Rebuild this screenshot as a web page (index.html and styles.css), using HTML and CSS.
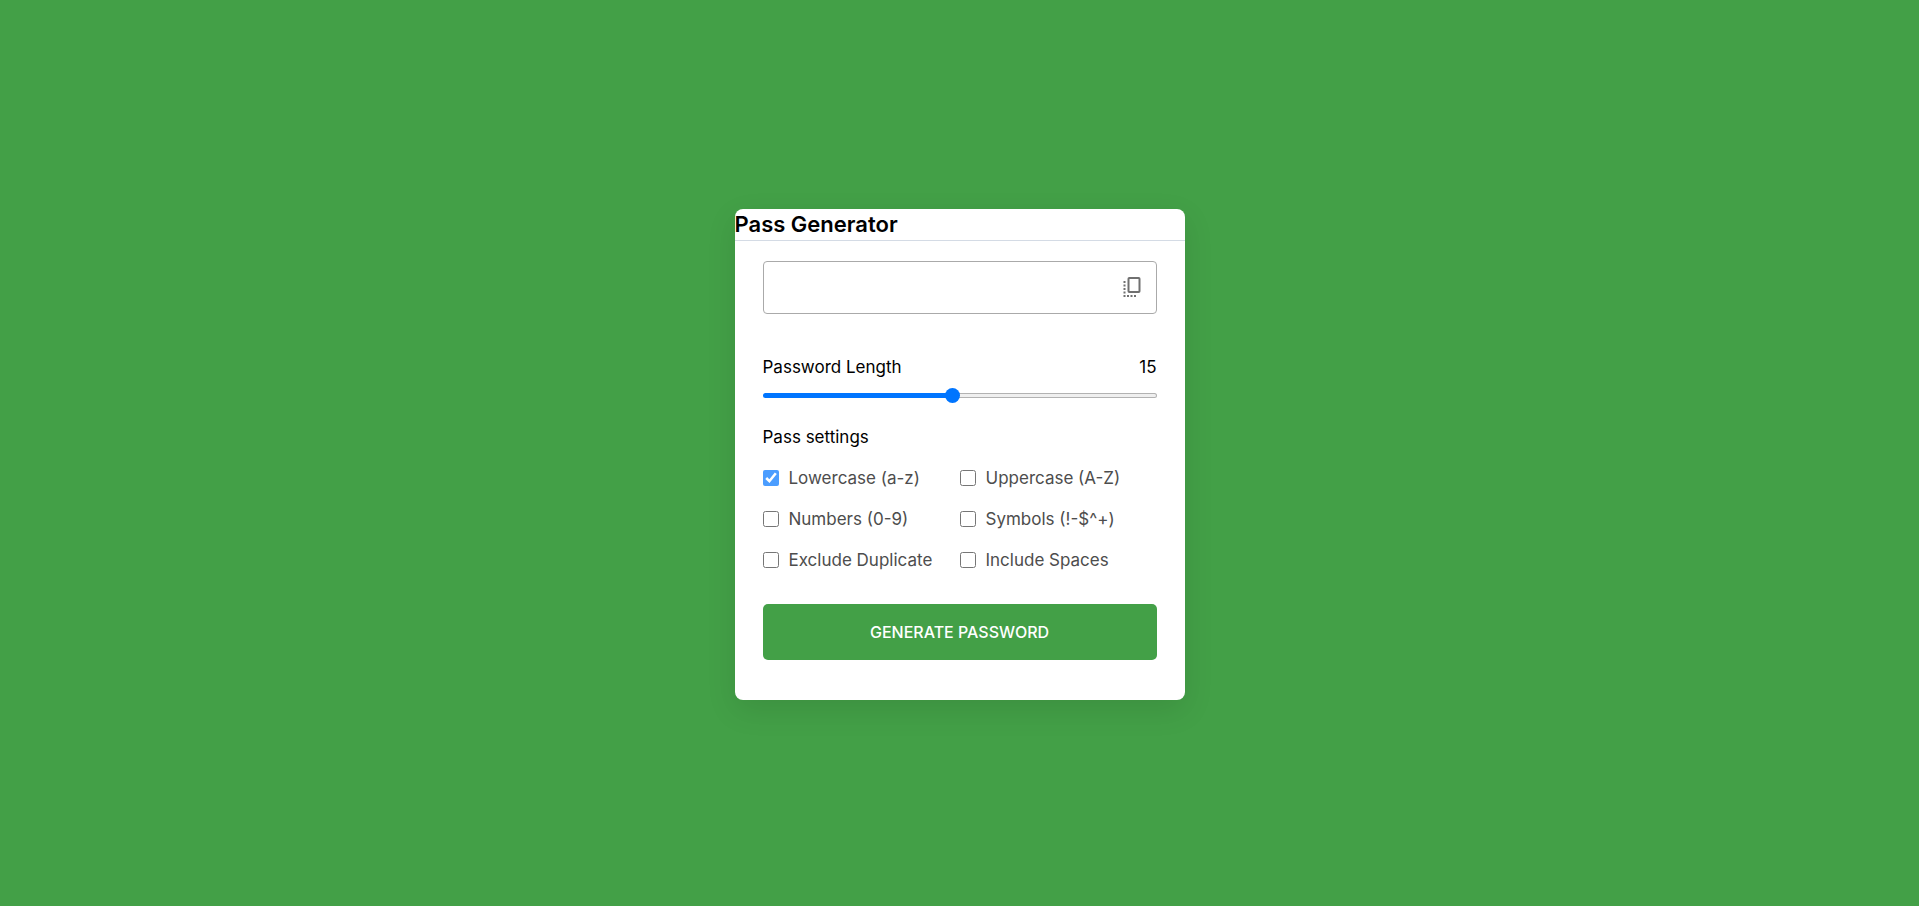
FILE: index.html
```html
<!DOCTYPE html>
<html lang="en">
<head>
  <meta charset="utf-8">
  <meta name="viewport" content="width=device-width, initial-scale=1">
  <title>Pass Generator</title>
  <link rel="stylesheet" href="styles.css">
</head>
<body>
  <main class="card">
    <h1 class="title">Pass Generator</h1>
    <div class="content">
      <div class="password">
        <input class="password-field" type="text" aria-label="Generated password" readonly>
        <button class="copy" type="button" aria-label="Copy password">
          <svg class="copy-icon" viewBox="0 0 18 20" aria-hidden="true">
            <rect x="5.5" y="1" width="11" height="14" rx="0.8" fill="none" stroke="currentColor" stroke-width="2"/>
            <path fill="currentColor" d="M.5 4h2v2h-2zM.5 7.5h2v2h-2zM.5 11h2v2h-2zM.5 14.5h2v2h-2zM.5 18h2v2h-2zM4 18h2v2H4zM7.5 18h2v2h-2zM11 18h2v2h-2z"/>
          </svg>
        </button>
      </div>
      <div class="length">
        <label for="length">Password Length</label>
        <output for="length">15</output>
      </div>
      <input class="slider" id="length" type="range" min="1" max="30" value="15" style="--fill: 48%">
      <fieldset class="settings">
        <legend class="legend">Pass settings</legend>
        <div class="options">
          <div class="option"><input class="check locked" type="checkbox" id="lowercase" checked><label for="lowercase">Lowercase (a-z)</label></div>
          <div class="option"><input class="check" type="checkbox" id="uppercase"><label for="uppercase">Uppercase (A-Z)</label></div>
          <div class="option"><input class="check" type="checkbox" id="numbers"><label for="numbers">Numbers (0-9)</label></div>
          <div class="option"><input class="check" type="checkbox" id="symbols"><label for="symbols">Symbols (!-$^+)</label></div>
          <div class="option"><input class="check" type="checkbox" id="duplicate"><label for="duplicate">Exclude Duplicate</label></div>
          <div class="option"><input class="check" type="checkbox" id="spaces"><label for="spaces">Include Spaces</label></div>
        </div>
      </fieldset>
      <button class="generate" type="button">GENERATE PASSWORD</button>
    </div>
  </main>
</body>
</html>
```

FILE: styles.css
```css
* {
  box-sizing: border-box;
  margin: 0;
  padding: 0;
}

body {
  display: flex;
  align-items: center;
  justify-content: center;
  min-height: 100vh;
  padding-top: 3px;
  background: #43a047;
  color: #000;
  font: 17px/24px Inter, "Liberation Sans", sans-serif;
}

.card {
  width: 100%;
  max-width: 450px;
  border-radius: 8px;
  background: #fff;
  box-shadow: 0 10px 30px rgba(0, 0, 0, 0.1);
}

.title {
  border-bottom: 1px solid #d4dbe5;
  font-size: 22px;
  font-weight: 600;
  line-height: 31px;
}

.content {
  padding: 20px 28px 40px;
}

.password {
  position: relative;
}

.password-field {
  display: block;
  width: 100%;
  height: 53px;
  padding: 0 44px 0 16px;
  border: 1px solid #aaa;
  border-radius: 4px;
  background: none;
  font: inherit;
  outline: none;
}

.copy {
  position: absolute;
  top: 0;
  right: 16px;
  bottom: 1px;
  border: 0;
  background: none;
  color: #707070;
  cursor: pointer;
}

.copy-icon {
  display: block;
  width: 18px;
  height: 20px;
}

.length {
  display: flex;
  justify-content: space-between;
  margin-top: 41px;
}

.slider {
  appearance: none;
  display: block;
  width: 100%;
  height: 16px;
  margin-top: 8px;
  background: none;
}

.slider::-webkit-slider-runnable-track {
  height: 5px;
  border: 1px solid transparent;
  border-radius: 3px;
  background:
    linear-gradient(#0075ff, #0075ff) 0 0 / var(--fill) 100% no-repeat border-box,
    linear-gradient(#efefef, #efefef) padding-box,
    linear-gradient(#b2b2b2, #b2b2b2) border-box;
}

.slider::-webkit-slider-thumb {
  appearance: none;
  width: 15px;
  height: 15px;
  margin-top: -6px;
  border-radius: 50%;
  background: #0075ff;
}

.settings {
  margin-top: 22px;
  border: 0;
}

.options {
  display: grid;
  grid-template-columns: 1fr 1fr;
  row-gap: 17px;
  margin-top: 17px;
}

.option {
  display: flex;
  align-items: center;
  gap: 10px;
  color: #4d4d4d;
}

.check {
  width: 16px;
  height: 16px;
  accent-color: #0075ff;
}

.locked {
  opacity: 0.7;
  pointer-events: none;
}

.generate {
  display: block;
  width: 100%;
  height: 56px;
  margin-top: 32px;
  border: 0;
  border-radius: 5px;
  background: #43a047;
  color: #fff;
  font: inherit;
  font-size: 16px;
  font-weight: 500;
  cursor: pointer;
}
```
